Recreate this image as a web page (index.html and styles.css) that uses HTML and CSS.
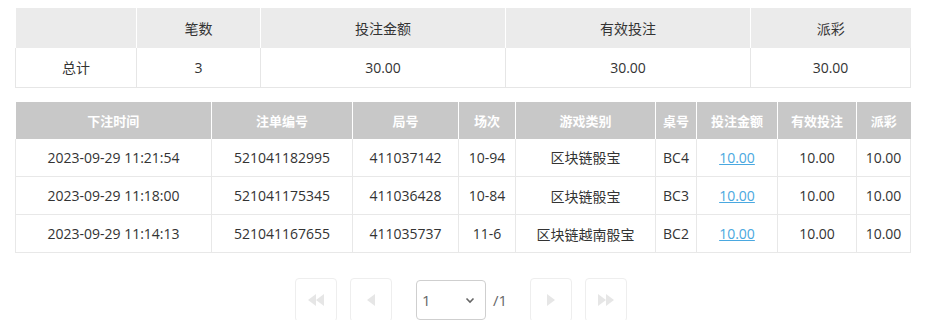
FILE: index.html
```html
<!DOCTYPE html>
<html lang="zh">
<head>
<meta charset="utf-8">
<link rel="stylesheet" href="styles.css">
</head>
<body>
<div class="page">
  <table class="summary">
    <colgroup><col style="width:121px"><col style="width:124px"><col style="width:245px"><col style="width:245px"><col style="width:160px"></colgroup>
    <thead>
      <tr><th></th><th>笔数</th><th>投注金额</th><th>有效投注</th><th>派彩</th></tr>
    </thead>
    <tbody>
      <tr><td>总计</td><td>3</td><td>30.00</td><td>30.00</td><td>30.00</td></tr>
    </tbody>
  </table>

  <table class="records">
    <colgroup><col style="width:196px"><col style="width:141px"><col style="width:106px"><col style="width:57px"><col style="width:140px"><col style="width:41px"><col style="width:81px"><col style="width:79px"><col style="width:54px"></colgroup>
    <thead>
      <tr><th>下注时间</th><th>注单编号</th><th>局号</th><th>场次</th><th>游戏类别</th><th>桌号</th><th>投注金额</th><th>有效投注</th><th>派彩</th></tr>
    </thead>
    <tbody>
      <tr><td>2023-09-29 11:21:54</td><td>521041182995</td><td>411037142</td><td>10-94</td><td>区块链骰宝</td><td>BC4</td><td><a class="amt" href="#">10.00</a></td><td>10.00</td><td>10.00</td></tr>
      <tr><td>2023-09-29 11:18:00</td><td>521041175345</td><td>411036428</td><td>10-84</td><td>区块链骰宝</td><td>BC3</td><td><a class="amt" href="#">10.00</a></td><td>10.00</td><td>10.00</td></tr>
      <tr><td>2023-09-29 11:14:13</td><td>521041167655</td><td>411035737</td><td>11-6</td><td>区块链越南骰宝</td><td>BC2</td><td><a class="amt" href="#">10.00</a></td><td>10.00</td><td>10.00</td></tr>
    </tbody>
  </table>

  <div class="pager">
    <button class="pbtn" aria-label="first"><svg width="18" height="12" viewBox="0 0 18 12"><path d="M9 0v12L1 6z M17 0v12L9 6z" fill="#e6e6e6"/></svg></button>
    <button class="pbtn gap-l" aria-label="prev"><svg width="10" height="12" viewBox="0 0 10 12"><path d="M9 0v12L1 6z" fill="#e6e6e6"/></svg></button>
    <div class="sel">
      <span>1</span>
      <svg width="10" height="7" viewBox="0 0 10 7"><path d="M1.5 1.5L5 5l3.5-3.5" fill="none" stroke="#666" stroke-width="1.6"/></svg>
    </div>
    <span class="total">/1</span>
    <button class="pbtn" aria-label="next"><svg width="10" height="12" viewBox="0 0 10 12"><path d="M1 0v12l8-6z" fill="#e6e6e6"/></svg></button>
    <button class="pbtn" aria-label="last"><svg width="18" height="12" viewBox="0 0 18 12"><path d="M1 0v12l8-6z M9 0v12l8-6z" fill="#e6e6e6"/></svg></button>
  </div>
</div>
</body>
</html>
```
FILE: styles.css
```css
* { box-sizing: border-box; }
html, body { margin: 0; background: #fff; }
body {
  font-family: "Open Sans", "Noto Sans CJK SC", sans-serif;
  font-size: 14px;
  color: #333;
}
.page {
  padding: 8px 0 0 15px;
  width: 911px;
}
table {
  border-collapse: collapse;
  table-layout: fixed;
  width: 895px;
}
.summary th, .summary td {
  text-align: center;
  font-weight: normal;
  border: 1px solid #e6e6e6;
}
.summary thead th {
  background: #ebebeb;
  height: 40px;
  border-color: #fff;
  border-top: 0;
  border-bottom: 0;
}
.summary thead th:first-child { border-left: 0; }
.summary thead th:last-child { border-right: 0; }
.summary tbody td {
  height: 39px;
  border-top: 0;
}
.records {
  margin-top: 14px;
}
.records th, .records td {
  text-align: center;
}
.records thead th {
  background: #c8c8c8;
  color: #fff;
  font-weight: bold;
  font-size: 13px;
  height: 37px;
  border-left: 1px solid #fff;
  border-right: 1px solid #fff;
}
.records thead th:first-child { border-left: 0; }
.records thead th:last-child { border-right: 0; }
.records tbody td {
  height: 38px;
  border: 1px solid #e8e8e8;
  border-top: 0;
  white-space: nowrap;
}
.amt {
  color: #4aa8e0;
  text-decoration: underline;
}
.pager {
  display: flex;
  align-items: flex-start;
  justify-content: center;
  margin-top: 25px;
  width: 896px;
  padding-left: 9px;
}
.pbtn {
  width: 42px;
  height: 44px;
  border: 1px solid #eeeeee;
  border-radius: 4px;
  background: #fff;
  display: flex;
  align-items: center;
  justify-content: center;
  padding: 0;
  margin-right: 13px;
}
.pbtn.gap-l { margin-right: 24px; }
.sel {
  margin-top: 2px;
  width: 70px;
  height: 40px;
  border: 1px solid #cfcfcf;
  border-radius: 4px;
  display: flex;
  align-items: center;
  justify-content: space-between;
  padding: 0 10px 0 5px;
  color: #666;
  font-size: 15px;
}
.total {
  margin: 12px 23px 0 7px;
  color: #666;
  font-size: 15px;
}
```
